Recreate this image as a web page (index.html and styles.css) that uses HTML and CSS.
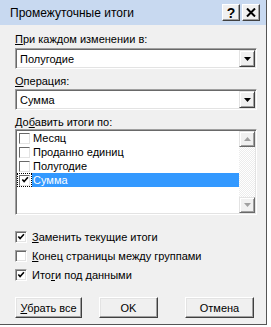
FILE: index.html
```html
<!DOCTYPE html>
<html>
<head>
<meta charset="utf-8">
<link rel="stylesheet" href="styles.css">
</head>
<body>
<div class="win">
  <div class="titlebar">
    <span class="title">Промежуточные итоги</span>
    <div class="tbtns">
      <span class="tb">?</span>
      <span class="tb"><svg width="10" height="9" viewBox="0 0 10 9"><path d="M1 0.5 L9 8.5 M9 0.5 L1 8.5" stroke="#000" stroke-width="2"/></svg></span>
    </div>
  </div>
  <div class="body">
    <div class="lbl"><u>П</u>ри каждом изменении в:</div>
    <div class="select"><span class="val">Полугодие</span><span class="abtn"><svg width="7" height="4" viewBox="0 0 7 4"><polygon points="0,0 7,0 3.5,4" fill="#000"/></svg></span></div>
    <div class="lbl lbl2"><u>О</u>перация:</div>
    <div class="select sel2"><span class="val">Сумма</span><span class="abtn"><svg width="7" height="4" viewBox="0 0 7 4"><polygon points="0,0 7,0 3.5,4" fill="#000"/></svg></span></div>
    <div class="lbl lbl2">До<u>б</u>авить итоги по:</div>
    <div class="list">
      <div class="items">
        <div class="item"><span class="cbw"><span class="lcb"></span></span><span class="itxt">Месяц</span></div>
        <div class="item"><span class="cbw"><span class="lcb"></span></span><span class="itxt">Проданно единиц</span></div>
        <div class="item"><span class="cbw"><span class="lcb"></span></span><span class="itxt">Полугодие</span></div>
        <div class="item"><span class="cbw focus"><span class="lcb"><svg width="9" height="9" viewBox="0 0 9 9"><polyline points="1.5,4 3.5,6.3 7.8,1.5" fill="none" stroke="#000" stroke-width="1.8"/></svg></span></span><span class="itxt sel">Сумма</span></div>
      </div>
      <div class="sbar">
        <span class="sbtn"><svg width="7" height="4" viewBox="0 0 7 4"><polygon points="0,4 7,4 3.5,0" fill="#a0a0a0"/></svg></span>
        <span class="track"></span>
        <span class="sbtn"><svg width="7" height="4" viewBox="0 0 7 4"><polygon points="0,0 7,0 3.5,4" fill="#a0a0a0"/></svg></span>
      </div>
    </div>
    <div class="checks">
      <div class="chk"><span class="cb"><svg width="9" height="9" viewBox="0 0 9 9"><polyline points="1.5,4 3.5,6.3 7.8,1.5" fill="none" stroke="#000" stroke-width="1.8"/></svg></span><span><u>З</u>аменить текущие итоги</span></div>
      <div class="chk"><span class="cb"></span><span><u>К</u>онец страницы между группами</span></div>
      <div class="chk"><span class="cb"><svg width="9" height="9" viewBox="0 0 9 9"><polyline points="1.5,4 3.5,6.3 7.8,1.5" fill="none" stroke="#000" stroke-width="1.8"/></svg></span><span>Ито<u>г</u>и под данными</span></div>
    </div>
    <div class="btns">
      <span class="btn b1"><span><u>У</u>брать все</span></span>
      <span class="btn b2">OK</span>
      <span class="btn b3">Отмена</span>
    </div>
  </div>
</div>
</body>
</html>
```
FILE: styles.css
```css
body {
  margin: 0;
  background: #fff;
  font-family: "Liberation Sans", Arial, sans-serif;
  font-size: 11px;
  color: #000;
}
.win {
  width: 266px;
  height: 324px;
  background: #f0f0f0;
  border-right: 1px solid #555;
  border-bottom: 1px solid #555;
  display: flex;
  flex-direction: column;
}
.titlebar {
  height: 25px;
  flex: none;
  background: #c8d9f0;
  display: flex;
  align-items: center;
  padding: 0 6px 0 10px;
}
.title {
  flex: 1;
  font-size: 12px;
}
.tbtns {
  display: flex;
  gap: 2px;
}
.tb {
  width: 18px;
  height: 17px;
  box-sizing: border-box;
  background: #f0f0f0;
  border: 1px solid;
  border-color: #fff #404040 #404040 #fff;
  box-shadow: inset -1px -1px #a0a0a0;
  display: flex;
  align-items: center;
  justify-content: center;
  font-weight: bold;
  font-size: 14px;
}
.body {
  padding: 8px 9px 0 15px;
  display: flex;
  flex-direction: column;
}
.lbl {
  height: 13px;
  line-height: 13px;
}
.lbl2 {
  margin-top: 6px;
}
.select {
  margin-top: 2px;
  height: 21px;
  box-sizing: border-box;
  background: #fff;
  border: 1px solid;
  border-color: #a0a0a0 #fff #fff #a0a0a0;
  box-shadow: inset 1px 1px #696969, inset -1px -1px #e3e3e3;
  display: flex;
  align-items: center;
  padding: 1px 1px 1px 4px;
}
.sel2 {
  margin-top: 1px;
}
.val {
  flex: 1;
}
.abtn {
  width: 16px;
  height: 17px;
  box-sizing: border-box;
  background: #f0f0f0;
  border: 1px solid;
  border-color: #e3e3e3 #404040 #404040 #e3e3e3;
  box-shadow: inset 1px 1px #fff, inset -1px -1px #a0a0a0;
  display: flex;
  align-items: center;
  justify-content: center;
}
.list {
  height: 86px;
  box-sizing: border-box;
  background: #fff;
  border: 1px solid;
  border-color: #a0a0a0 #fff #fff #a0a0a0;
  box-shadow: inset 1px 1px #696969, inset -1px -1px #e3e3e3;
  padding: 1px;
  display: flex;
}
.items {
  flex: 1;
  display: flex;
  flex-direction: column;
}
.item {
  height: 14px;
  display: flex;
  align-items: center;
}
.cbw {
  width: 15px;
  height: 14px;
  box-sizing: border-box;
  display: flex;
  align-items: center;
  justify-content: center;
}
.focus {
  border: 1px dotted #000;
}
.lcb {
  width: 11px;
  height: 11px;
  box-sizing: border-box;
  border: 1px solid;
  border-color: #696969 #e3e3e3 #e3e3e3 #696969;
  background: #fff;
  display: flex;
  align-items: center;
  justify-content: center;
}
.lcb svg {
  width: 8px;
  height: 8px;
}
.itxt {
  flex: 1;
  height: 14px;
  line-height: 14px;
  padding-left: 1px;
}
.sel {
  background: #3399ff;
  color: #fff;
}
.sbar {
  width: 16px;
  display: flex;
  flex-direction: column;
}
.sbtn {
  height: 16px;
  box-sizing: border-box;
  background: #f0f0f0;
  border: 1px solid;
  border-color: #e3e3e3 #696969 #696969 #e3e3e3;
  box-shadow: inset 1px 1px #fff, inset -1px -1px #a0a0a0;
  display: flex;
  align-items: center;
  justify-content: center;
}
.track {
  flex: 1;
  background-color: #fff;
  background-image: conic-gradient(#ececec 25%, #fff 0 50%, #ececec 0 75%, #fff 0);
  background-size: 2px 2px;
}
.checks {
  margin-top: 12px;
  display: flex;
  flex-direction: column;
}
.chk {
  height: 19px;
  display: flex;
  align-items: center;
  gap: 5px;
}
.cb {
  width: 12px;
  height: 12px;
  box-sizing: border-box;
  background: #fff;
  border: 1px solid;
  border-color: #a0a0a0 #fff #fff #a0a0a0;
  box-shadow: inset 1px 1px #696969, inset -1px -1px #e3e3e3;
  display: flex;
  align-items: center;
  justify-content: center;
}
.cb svg {
  width: 8px;
  height: 8px;
}
.btns {
  margin-top: 13px;
  display: flex;
}
.btn {
  height: 21px;
  box-sizing: border-box;
  background: #f0f0f0;
  border: 1px solid;
  border-color: #fff #404040 #404040 #fff;
  box-shadow: inset -1px -1px #a0a0a0, inset 1px 1px #e3e3e3;
  display: flex;
  align-items: center;
  justify-content: center;
}
.b1 {
  width: 67px;
}
.b2 {
  width: 59px;
  margin-left: 17px;
}
.b3 {
  width: 69px;
  margin-left: 27px;
}
```
